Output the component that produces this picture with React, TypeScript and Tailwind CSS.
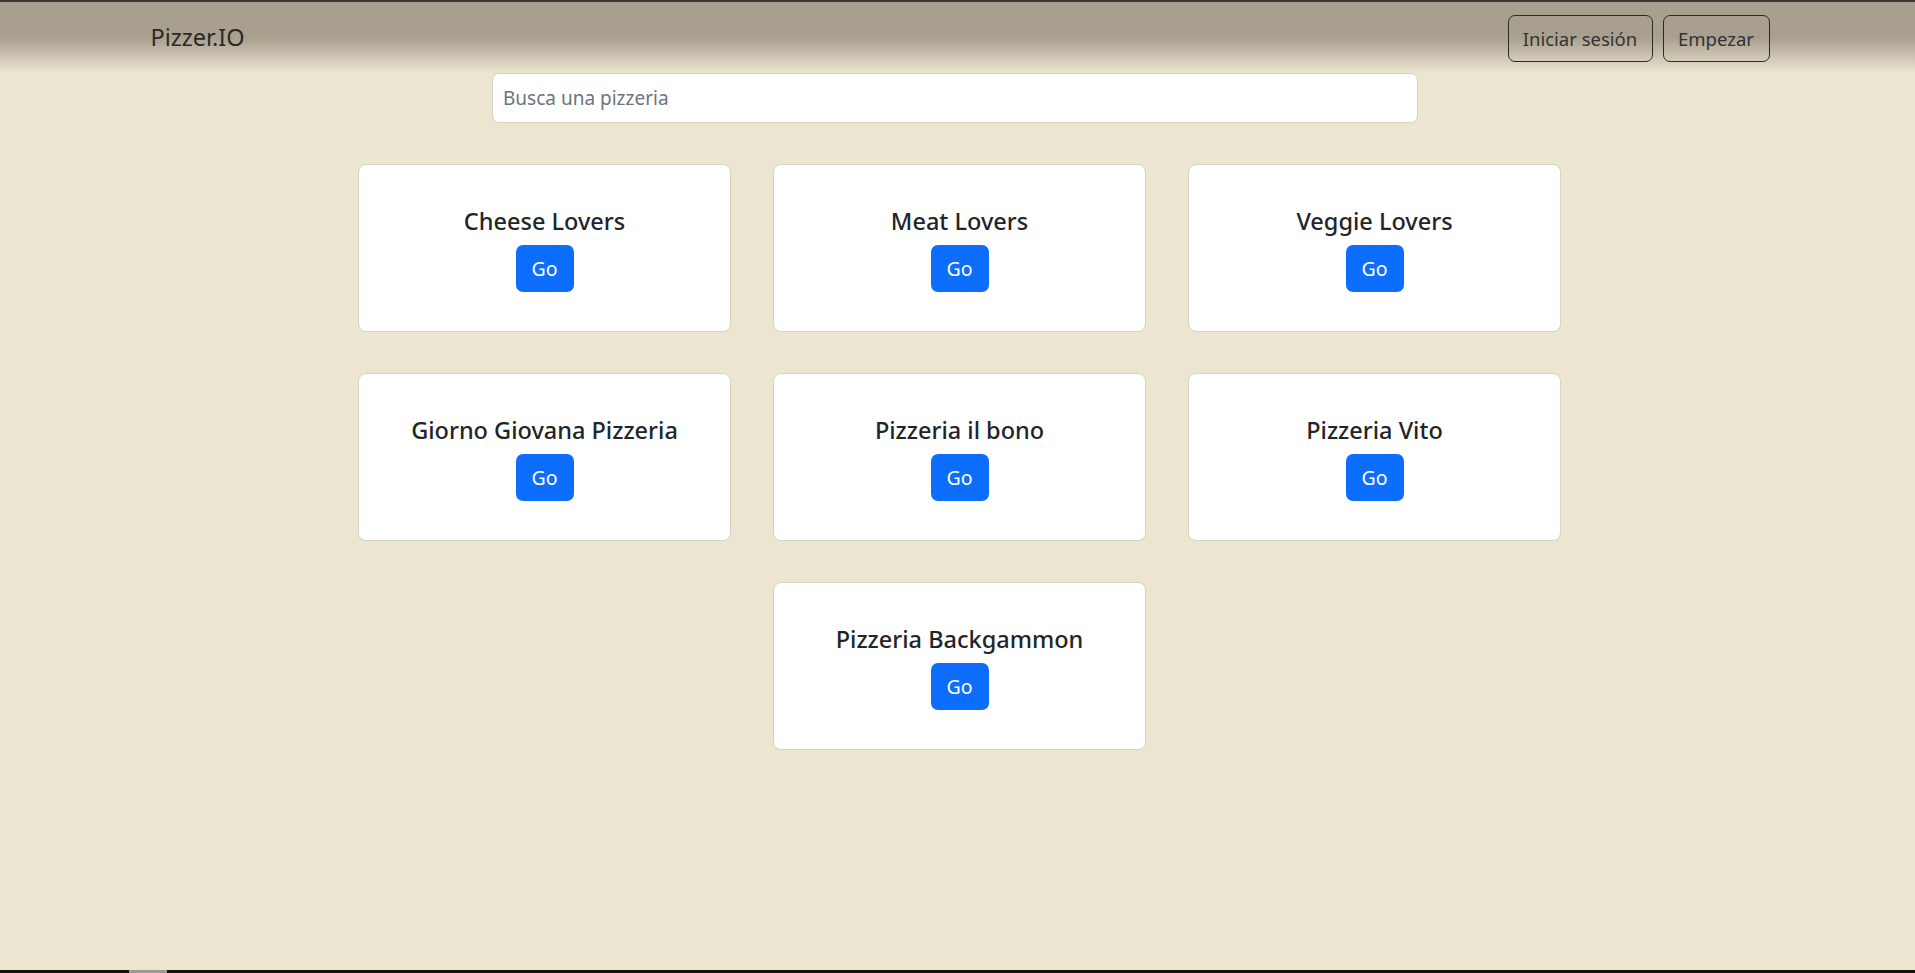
import React from 'react';

const pizzerias = [
  'Cheese Lovers',
  'Meat Lovers',
  'Veggie Lovers',
  'Giorno Giovana Pizzeria',
  'Pizzeria il bono',
  'Pizzeria Vito',
  'Pizzeria Backgammon',
];

const PizzeriaCard = ({ name }: { name: string }) => (
  <div className="w-[373px] h-[168px] bg-white border border-[#d6d2c6] rounded-[8px] flex flex-col items-center pt-[41px]">
    <h5 className="text-[23.5px] font-medium leading-[30px] text-[#212529] mb-[9px]">{name}</h5>
    <button className="h-[47px] w-[58px] rounded-[7px] bg-[#0d6efd] text-white text-[19.5px]">Go</button>
  </div>
);

const App = () => {
  return (
    <div
      className="h-[973px] w-full overflow-hidden flex flex-col bg-[#ece5cf]"
      style={{ fontFamily: '"Segoe UI", "Noto Sans", "Liberation Sans", sans-serif' }}
    >
      {/* Navbar */}
      <div className="h-[2px] bg-[#3b3a35]" />
      <nav className="h-[71px] bg-[linear-gradient(to_bottom,#a89f8f_0%,#a89f8f_50%,#ece5cf_100%)]">
        <div className="w-[1650px] mx-auto pl-[15px] pr-[13px] h-full flex items-center justify-between">
          <span className="text-[23.5px] text-[#2b2a27] pl-[3px]">Pizzer.IO</span>
          <div className="flex gap-[10px] pt-[2px]">
            <button className="h-[47px] w-[145px] border border-[#2b2a27] rounded-[7px] text-[18.5px] text-[#333]">
              Iniciar sesión
            </button>
            <button className="h-[47px] w-[107px] border border-[#2b2a27] rounded-[7px] text-[18.5px] text-[#333]">
              Empezar
            </button>
          </div>
        </div>
      </nav>

      {/* Search */}
      <div className="flex justify-center pr-[5px]">
        <input
          type="text"
          placeholder="Busca una pizzeria"
          className="w-[926px] h-[50px] bg-white border border-[#d6d2c6] rounded-[7px] px-[10px] text-[19px] text-[#212529] placeholder:text-[#6c757d] outline-none"
        />
      </div>

      {/* Cards */}
      <div className="flex-1">
        <div className="w-[1207px] mx-auto pl-[4px] mt-[41px] flex flex-wrap justify-center gap-x-[42px] gap-y-[41px]">
          {pizzerias.map((p) => (
            <PizzeriaCard key={p} name={p} />
          ))}
        </div>
      </div>

      {/* Bottom edge */}
      <div className="h-[3px] bg-[#111] flex">
        <div className="w-[129px]" />
        <div className="w-[38px] bg-[#9a9a9a]" />
      </div>
    </div>
  );
};

export default App;
